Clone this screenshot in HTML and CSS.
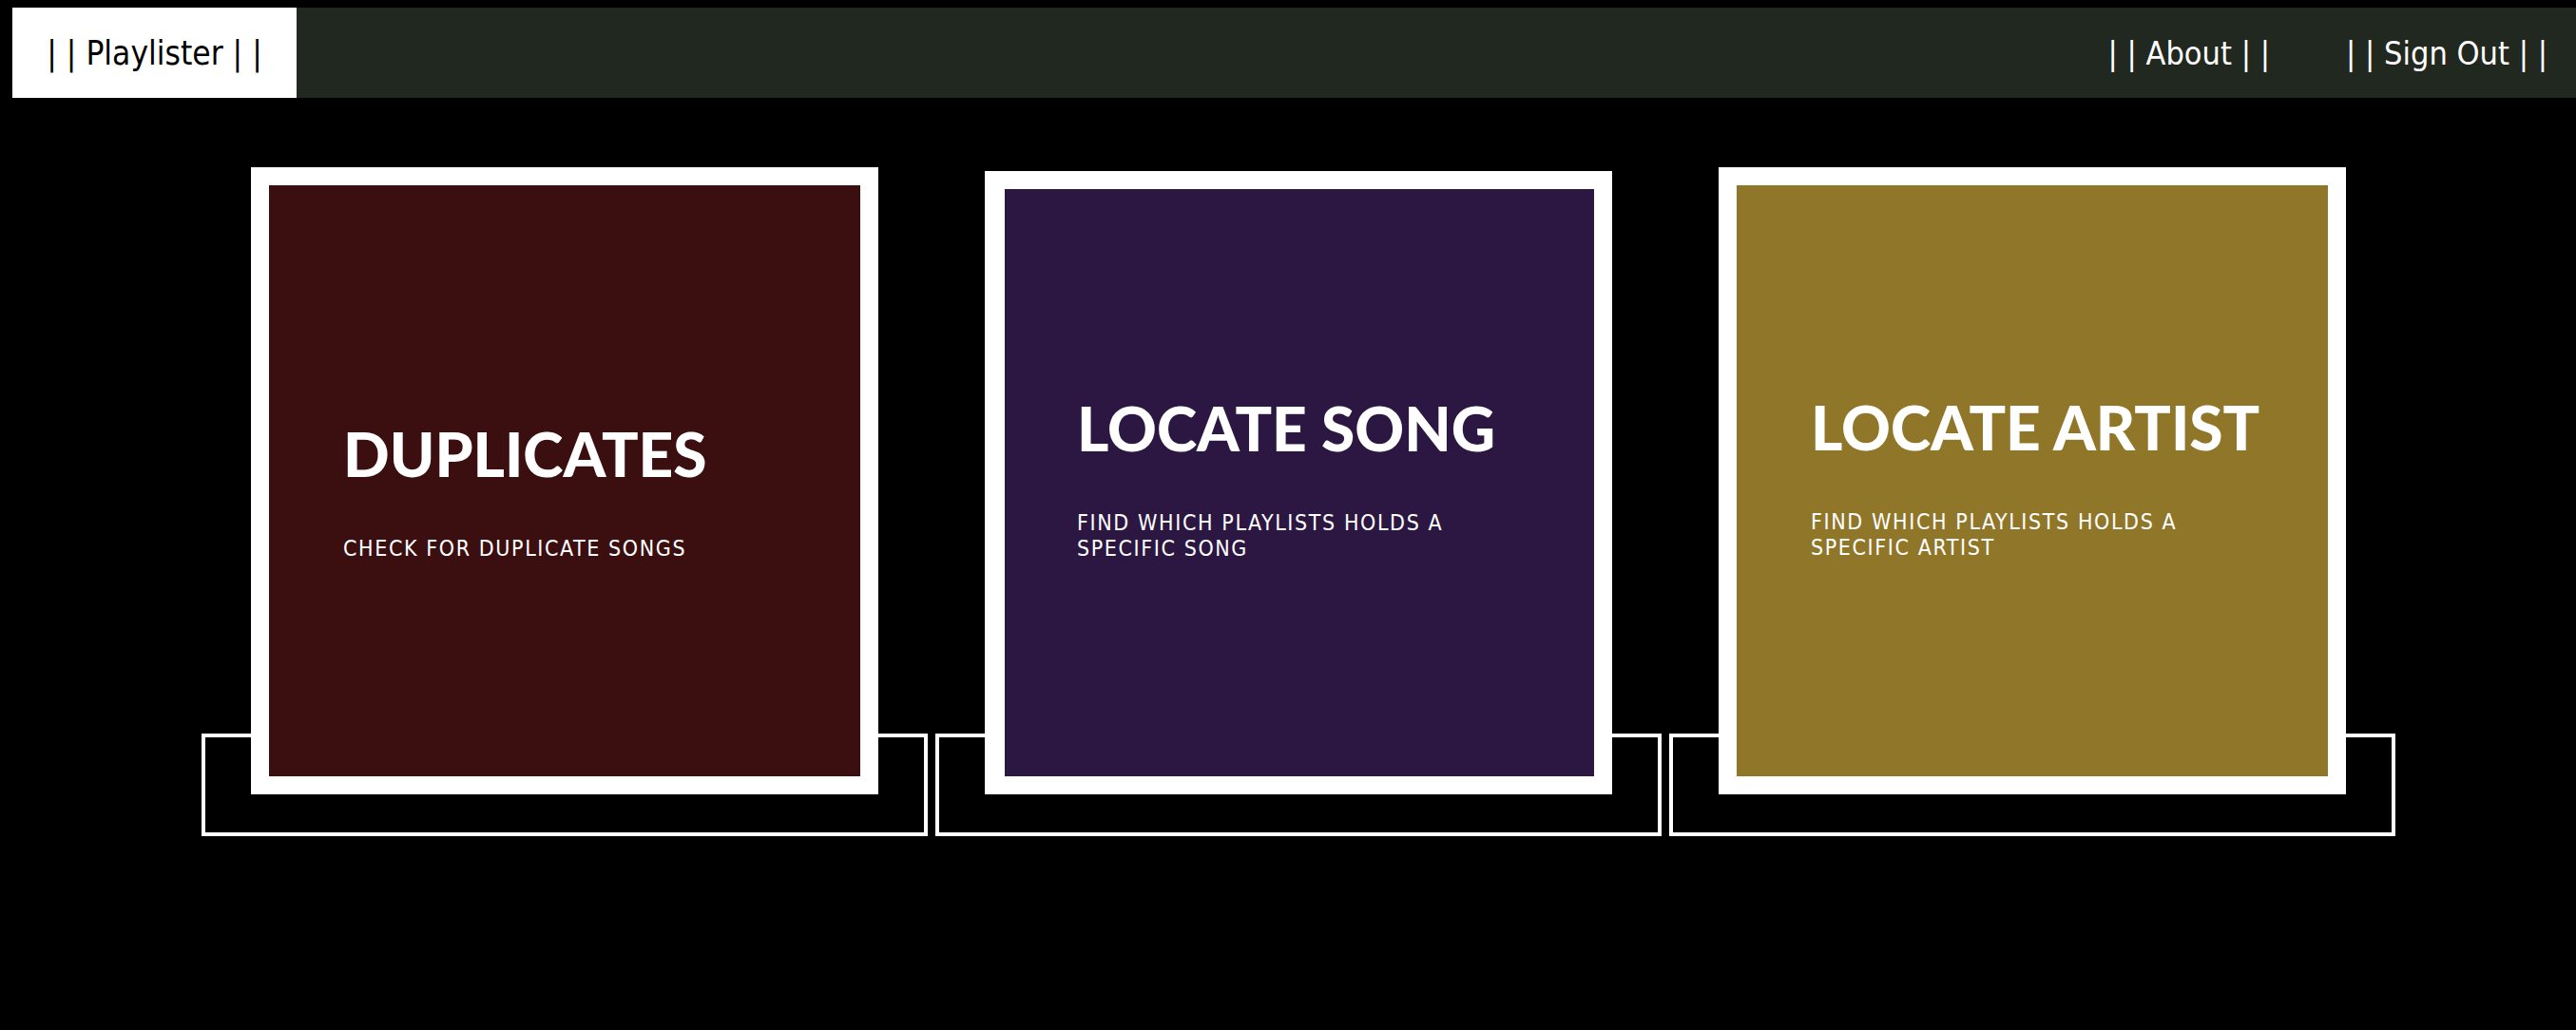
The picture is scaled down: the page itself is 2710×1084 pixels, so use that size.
FILE: index.html
```html
<!DOCTYPE html>
<html lang="en">
<head>
<meta charset="utf-8">
<title>Playlister</title>
<link rel="stylesheet" href="styles.css">
</head>
<body>
<nav class="nav">
  <a class="logo" href="#">| | Playlister | |</a>
  <div class="nav-links">
    <a class="nav-link" href="#">| | About | |</a>
    <a class="nav-link" href="#">| | Sign Out | |</a>
  </div>
</nav>
<main class="tools">
  <div class="tool">
    <a class="card card-dup" href="#">
      <h2 class="card-title">DUPLICATES</h2>
      <p class="card-sub">CHECK FOR DUPLICATE SONGS</p>
    </a>
    <div class="tool-box"></div>
  </div>
  <div class="tool">
    <a class="card card-song" href="#">
      <h2 class="card-title">LOCATE SONG</h2>
      <p class="card-sub">FIND WHICH PLAYLISTS HOLDS A SPECIFIC SONG</p>
    </a>
    <div class="tool-box"></div>
  </div>
  <div class="tool">
    <a class="card card-artist" href="#">
      <h2 class="card-title">LOCATE ARTIST</h2>
      <p class="card-sub">FIND WHICH PLAYLISTS HOLDS A SPECIFIC ARTIST</p>
    </a>
    <div class="tool-box"></div>
  </div>
</main>
</body>
</html>
```
FILE: styles.css
```css
html, body {
  margin: 0;
  padding: 0;
  background: #000;
}
body {
  padding-top: 8px;
  font-family: "DejaVu Sans Condensed", "DejaVu Sans", sans-serif;
}
a {
  text-decoration: none;
}
.nav {
  display: flex;
  align-items: stretch;
  height: 95px;
  margin-left: 13px;
  background: #212820;
}
.logo {
  width: 299px;
  display: flex;
  align-items: center;
  justify-content: center;
  background: #fff;
  color: #000;
  font-size: 35px;
  white-space: pre;
}
.nav-links {
  margin-left: auto;
  display: flex;
  align-items: center;
  gap: 80px;
  padding-right: 30px;
}
.nav-link {
  color: #fff;
  font-size: 34px;
  white-space: pre;
}
.tools {
  display: flex;
  gap: 8px;
  padding: 73px 0 0 212px;
}
.tool {
  width: 764px;
  display: flex;
  flex-direction: column;
  align-items: center;
}
.card {
  position: relative;
  z-index: 1;
  box-sizing: border-box;
  width: 660px;
  height: 660px;
  border: 19px solid #fff;
  padding-left: 78px;
  display: flex;
  flex-direction: column;
  justify-content: center;
  color: #fff;
}
.card-dup {
  background: #3b0f10;
  padding-top: 24px;
}
.card-song {
  background: #2b1741;
  margin-top: 4px;
  height: 656px;
  border-left-width: 21px;
  padding-left: 76px;
  padding-bottom: 7px;
}
.card-artist {
  background: #907628;
  padding-bottom: 4px;
}
.card-title {
  margin: 0;
  font-family: Lato, "Noto Sans", sans-serif;
  font-weight: 900;
  font-size: 64px;
  line-height: 64px;
  letter-spacing: 0;
}
.card-sub {
  margin: 54px 0 0;
  max-width: 430px;
  font-family: "Liberation Sans Narrow", "DejaVu Sans Condensed", sans-serif;
  font-stretch: condensed;
  font-size: 23px;
  line-height: 27px;
  letter-spacing: 1.6px;
}
.tool-box {
  box-sizing: border-box;
  width: 764px;
  height: 108px;
  margin-top: -64px;
  border: 4px solid #fff;
}
```
